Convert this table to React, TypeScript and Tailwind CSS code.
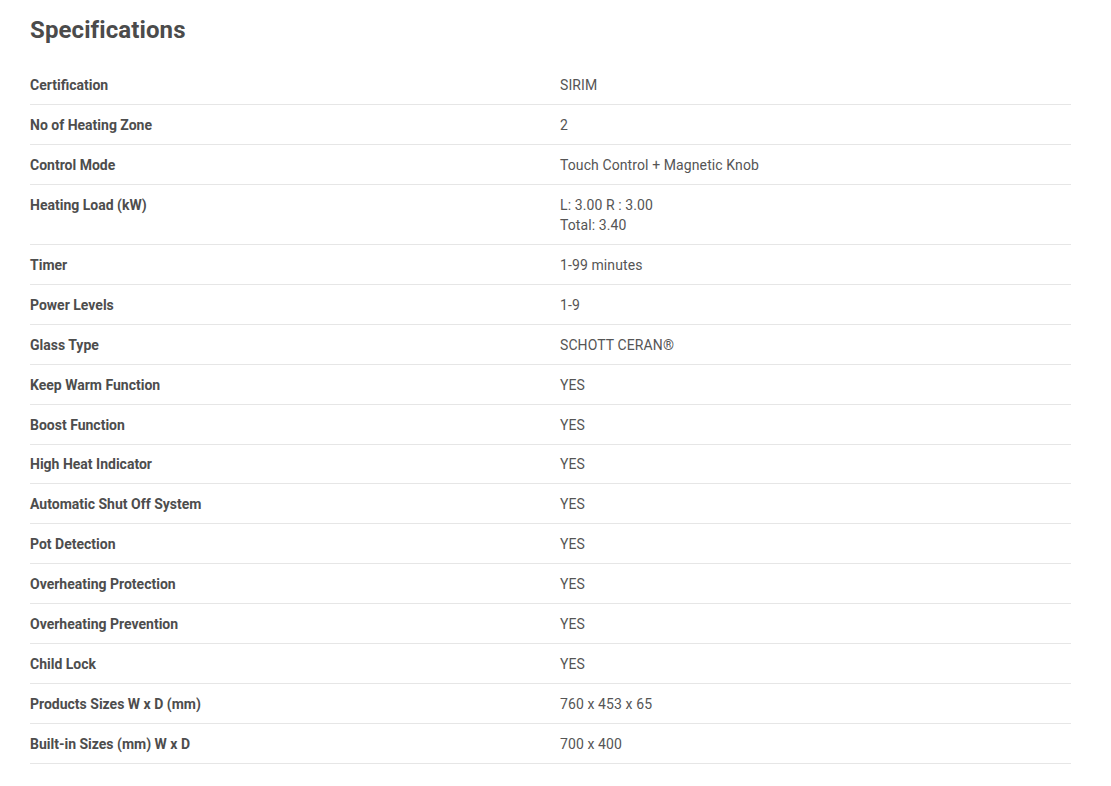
import React from 'react';

const specs: { label: string; value: string[] }[] = [
  { label: 'Certification', value: ['SIRIM'] },
  { label: 'No of Heating Zone', value: ['2'] },
  { label: 'Control Mode', value: ['Touch Control + Magnetic Knob'] },
  { label: 'Heating Load (kW)', value: ['L: 3.00 R : 3.00', 'Total: 3.40'] },
  { label: 'Timer', value: ['1-99 minutes'] },
  { label: 'Power Levels', value: ['1-9'] },
  { label: 'Glass Type', value: ['SCHOTT CERAN®'] },
  { label: 'Keep Warm Function', value: ['YES'] },
  { label: 'Boost Function', value: ['YES'] },
  { label: 'High Heat Indicator', value: ['YES'] },
  { label: 'Automatic Shut Off System', value: ['YES'] },
  { label: 'Pot Detection', value: ['YES'] },
  { label: 'Overheating Protection', value: ['YES'] },
  { label: 'Overheating Prevention', value: ['YES'] },
  { label: 'Child Lock', value: ['YES'] },
  { label: 'Products Sizes W x D (mm)', value: ['760 x 453 x 65'] },
  { label: 'Built-in Sizes (mm) W x D', value: ['700 x 400'] },
];

export default function App() {
  return (
    <div className="min-h-screen bg-white px-[30px] pt-[15.5px] font-['Roboto',sans-serif]">
      {/* Heading */}
      <h2 className="text-[24px] leading-[29px] font-bold tracking-[0.1px] text-[#4b4b4b]">Specifications</h2>

      {/* Spec table */}
      <div className="mt-[21px] w-[1041px]">
        {specs.map((s) => (
          <div key={s.label} className="flex border-b border-[#e6e6e6] pt-[9.9px] pb-[9px] text-[14px] leading-5">
            <div className="w-[530px] shrink-0 font-bold text-[#4d4d4d]">{s.label}</div>
            <div className="flex flex-col tracking-[0.1px] text-[#555555]">
              {s.value.map((v) => (
                <span key={v}>{v}</span>
              ))}
            </div>
          </div>
        ))}
      </div>
    </div>
  );
}
